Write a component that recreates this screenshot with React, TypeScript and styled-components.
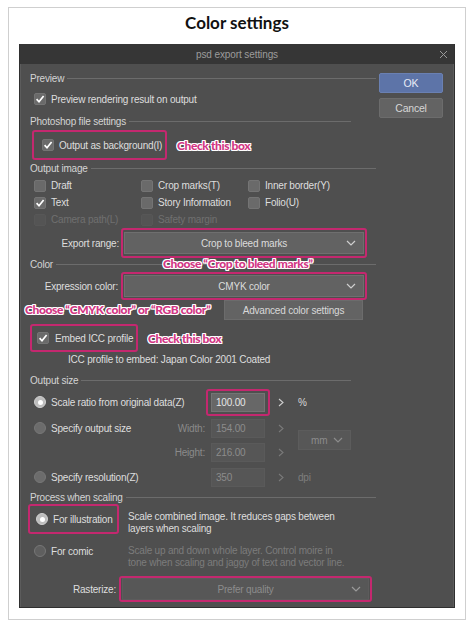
import styled, { createGlobalStyle } from 'styled-components';

const GlobalStyle = createGlobalStyle`
  html, body {
    margin: 0;
    padding: 0;
    background: #ffffff;
  }
  body {
    font-family: 'Liberation Sans', Arial, sans-serif;
  }
`;

const Page = styled.div`
  width: 474px;
  height: 627px;
  box-sizing: border-box;
  padding: 7px 8px;
`;

const Frame = styled.div`
  height: 613px;
  box-sizing: border-box;
  border: 1px solid #cfcfcf;
  display: flex;
  flex-direction: column;
`;

const Title = styled.h1`
  margin: 0;
  height: 36px;
  line-height: 30px;
  text-align: center;
  font-family: Lato, 'Noto Sans', sans-serif;
  font-weight: 700;
  font-size: 17px;
  color: #111;
`;

const Dialog = styled.div`
  margin: 0 10px;
  border: 1px solid #2f2f2f;
  border-top: none;
  display: flex;
  flex-direction: column;
`;

const TitleBar = styled.div`
  height: 20px;
  background: #363636;
  display: flex;
  align-items: center;
  justify-content: center;
  position: relative;
  color: #9c9c9c;
  font-size: 10px;
  letter-spacing: -0.1px;
`;

const CloseIcon = styled.svg`
  position: absolute;
  right: 6px;
  top: 6px;
`;

const Body = styled.div`
  display: grid;
  grid-template-columns: 359px 64px;
  padding: 6px 12px 8px 0;
  height: 543px;
  box-sizing: border-box;
  background: #4f4f4f;
  box-shadow: inset 1px 0 0 #5c5c5c, inset -1px 0 0 #5c5c5c;
  font-size: 10px;
  letter-spacing: -0.2px;
  color: #dedede;
`;

const Main = styled.div`
  display: flex;
  flex-direction: column;
  padding-left: 10px;
`;

const Side = styled.div`
  display: flex;
  flex-direction: column;
  gap: 5px;
  padding-top: 3px;
`;

const DialogButton = styled.div<{ $primary?: boolean }>`
  height: 20px;
  border-radius: 2px;
  display: flex;
  align-items: center;
  justify-content: center;
  font-size: 10.5px;
  color: ${({ $primary }) => ($primary ? '#e8ecf6' : '#d6d6d6')};
  background: ${({ $primary }) => ($primary ? '#5d74a8' : '#636363')};
  border: 1px solid ${({ $primary }) => ($primary ? '#6a80b2' : '#6c6c6c')};
  box-sizing: border-box;
`;

const SectionHeader = styled.div<{ $h: number; $w: number; $mt?: number }>`
  display: flex;
  align-items: center;
  gap: 3px;
  height: ${({ $h }) => $h}px;
  width: ${({ $w }) => $w}px;
  margin-top: ${({ $mt }) => $mt ?? 0}px;
  color: #d4d4d4;
  position: relative;
  &::after {
    content: '';
    flex: 1;
    height: 1px;
    background: #6c6c6c;
  }
`;

const Row = styled.div<{ $h: number; $pl?: number; $mt?: number }>`
  display: flex;
  align-items: center;
  height: ${({ $h }) => $h}px;
  padding-left: ${({ $pl }) => $pl ?? 0}px;
  margin-top: ${({ $mt }) => $mt ?? 0}px;
  position: relative;
`;

const Item = styled.div<{ $gap?: number; $tone?: 'on' | 'dim' | 'off' }>`
  display: flex;
  align-items: center;
  gap: ${({ $gap }) => $gap ?? 5}px;
  white-space: nowrap;
  color: ${({ $tone }) =>
    $tone === 'off' ? '#707070' : $tone === 'dim' ? '#8c8c8c' : '#dedede'};
`;

const Box = styled.span<{ $off?: boolean }>`
  width: 12px;
  height: 12px;
  box-sizing: border-box;
  border-radius: 2px;
  background: ${({ $off }) => ($off ? '#545454' : '#6a6a6a')};
  border: 1px solid ${({ $off }) => ($off ? '#575757' : '#747474')};
  display: inline-flex;
  align-items: center;
  justify-content: center;
  flex: none;
`;

const Radio = styled.span<{ $on?: boolean; $off?: boolean }>`
  width: 12px;
  height: 12px;
  box-sizing: border-box;
  border-radius: 50%;
  flex: none;
  background: ${({ $on, $off }) => ($on ? '#bdbdbd' : $off ? '#5f5f5f' : '#6c6c6c')};
  border: 1px solid ${({ $on }) => ($on ? '#d0d0d0' : '#777')};
  display: inline-flex;
  align-items: center;
  justify-content: center;
  &::after {
    content: '';
    display: ${({ $on }) => ($on ? 'block' : 'none')};
    width: 5px;
    height: 5px;
    border-radius: 50%;
    background: #ffffff;
  }
`;

const Highlight = styled.div<{ $w: number; $h: number; $pad?: string; $ml?: number }>`
  box-sizing: border-box;
  width: ${({ $w }) => $w}px;
  height: ${({ $h }) => $h}px;
  margin-left: ${({ $ml }) => $ml ?? 0}px;
  padding: ${({ $pad }) => $pad ?? '0'};
  border: 2px solid #c4286f;
  border-radius: 3px;
  display: flex;
  align-items: center;
  flex: none;
`;

const Note = styled.span`
  font-family: Lato, 'Noto Sans', sans-serif;
  font-weight: 900;
  font-size: 12px;
  letter-spacing: -0.4px;
  color: #d23684;
  white-space: nowrap;
  text-shadow:
    1px 0 0 #fff, -1px 0 0 #fff, 0 1px 0 #fff, 0 -1px 0 #fff,
    1px 1px 0 #fff, -1px -1px 0 #fff, 1px -1px 0 #fff, -1px 1px 0 #fff;
`;

const FloatingNote = styled(Note)<{ $left: number; $top: number }>`
  position: absolute;
  left: ${({ $left }) => $left}px;
  top: ${({ $top }) => $top}px;
  line-height: 14px;
`;

const OptionGrid = styled.div`
  display: grid;
  grid-template-columns: 107px 107px auto;
  grid-auto-rows: 17px;
  padding-left: 4px;
  align-items: center;
`;

const FieldLabel = styled.div<{ $w: number; $tone?: 'dim' }>`
  width: ${({ $w }) => $w}px;
  text-align: right;
  flex: none;
  white-space: nowrap;
  color: ${({ $tone }) => ($tone === 'dim' ? '#8a8a8a' : '#dedede')};
`;

const Select = styled.div<{ $w: number; $h: number; $off?: boolean }>`
  box-sizing: border-box;
  width: ${({ $w }) => $w}px;
  height: ${({ $h }) => $h}px;
  background: ${({ $off }) => ($off ? '#575757' : '#626262')};
  border: 1px solid ${({ $off }) => ($off ? '#5c5c5c' : '#6f6f6f')};
  display: flex;
  align-items: center;
  justify-content: center;
  position: relative;
  color: ${({ $off }) => ($off ? '#8c8c8c' : '#dcdcdc')};
  svg {
    position: absolute;
    right: 7px;
    top: 50%;
    margin-top: -3px;
  }
`;

const PlainButton = styled.div<{ $w: number; $ml: number }>`
  box-sizing: border-box;
  width: ${({ $w }) => $w}px;
  height: 20px;
  margin-left: ${({ $ml }) => $ml}px;
  background: #636363;
  border: 1px solid #6c6c6c;
  display: flex;
  align-items: center;
  justify-content: center;
  color: #d8d8d8;
`;

const SizeGrid = styled.div`
  display: grid;
  grid-template-columns: 176px 64px 28px auto;
  grid-template-rows: 28px 24px 24px 26px;
  align-items: center;
`;

const Input = styled.div<{ $active?: boolean }>`
  box-sizing: border-box;
  width: 54px;
  height: 19px;
  margin-left: ${({ $active }) => ($active ? 0 : 5)}px;
  padding-left: 4px;
  display: flex;
  align-items: center;
  background: ${({ $active }) => ($active ? '#676767' : '#565656')};
  border: 1px solid ${({ $active }) => ($active ? '#747474' : '#5a5a5a')};
  color: ${({ $active }) => ($active ? '#e6e6e6' : '#8c8c8c')};
`;

const Arrow = styled.div`
  padding-left: 8px;
  display: flex;
  align-items: center;
`;

const Unit = styled.div<{ $on?: boolean }>`
  color: ${({ $on }) => ($on ? '#d8d8d8' : '#7e7e7e')};
`;

const ScaleGrid = styled.div`
  display: grid;
  grid-template-columns: 98px auto;
  grid-template-rows: 30px 40px;
`;

const Desc = styled.div<{ $pt: number; $dim?: boolean }>`
  padding-top: ${({ $pt }) => $pt}px;
  line-height: 12px;
  color: ${({ $dim }) => ($dim ? '#7c7c7c' : '#dedede')};
`;

const Check = () => (
  <svg width="10" height="10" viewBox="0 0 10 10">
    <polyline points="1.6,5.2 4,7.8 8.6,2" fill="none" stroke="#ffffff" strokeWidth="1.7" />
  </svg>
);

const Chevron = ({ color = '#cfcfcf' }: { color?: string }) => (
  <svg width="10" height="6" viewBox="0 0 10 6">
    <polyline points="1,1 5,5 9,1" fill="none" stroke={color} strokeWidth="1.2" />
  </svg>
);

const RightArrow = ({ color }: { color: string }) => (
  <svg width="6" height="9" viewBox="0 0 6 9">
    <polyline points="1,1 5,4.5 1,8" fill="none" stroke={color} strokeWidth="1.1" />
  </svg>
);

const CheckItem = ({ label, checked, off }: { label: string; checked?: boolean; off?: boolean }) => (
  <Item $tone={off ? 'off' : 'on'}>
    <Box $off={off}>{checked && <Check />}</Box>
    {label}
  </Item>
);

export default function App() {
  return (
    <>
      <GlobalStyle />
      <Page>
        <Frame>
          <Title>Color settings</Title>
          <Dialog>
            <TitleBar>
              psd export settings
              <CloseIcon width="9" height="9" viewBox="0 0 9 9">
                <path d="M1 1 L8 8 M8 1 L1 8" stroke="#9a9a9a" strokeWidth="1" />
              </CloseIcon>
            </TitleBar>
            <Body>
              <Main>
                <SectionHeader $h={16} $w={346}>Preview</SectionHeader>
                <Row $h={26} $pl={4}>
                  <CheckItem label="Preview rendering result on output" checked />
                </Row>

                <SectionHeader $h={18} $w={321}>Photoshop file settings</SectionHeader>
                <Row $h={30} $pl={2}>
                  <Highlight $w={135} $h={30} $pad="0 0 0 8px">
                    <CheckItem label="Output as background(I)" checked />
                  </Highlight>
                  <Note style={{ marginLeft: 10 }}>Check this box</Note>
                </Row>

                <SectionHeader $h={17} $w={346}>Output image</SectionHeader>
                <OptionGrid>
                  <CheckItem label="Draft" />
                  <CheckItem label="Crop marks(T)" />
                  <CheckItem label="Inner border(Y)" />
                  <CheckItem label="Text" checked />
                  <CheckItem label="Story Information" />
                  <CheckItem label="Folio(U)" />
                  <CheckItem label="Camera path(L)" off />
                  <CheckItem label="Safety margin" off />
                </OptionGrid>
                <Row $h={30}>
                  <FieldLabel $w={89}>Export range:</FieldLabel>
                  <Highlight $w={246} $h={30} $ml={2} $pad="0 1px">
                    <Select $w={240} $h={22}>
                      Crop to bleed marks
                      <Chevron />
                    </Select>
                  </Highlight>
                </Row>

                <SectionHeader $h={12} $w={346}>
                  Color
                  <FloatingNote $left={133} $top={-1}>Choose “Crop to bleed marks”</FloatingNote>
                </SectionHeader>
                <Row $h={28} $mt={2}>
                  <FieldLabel $w={88}>Expression color:</FieldLabel>
                  <Highlight $w={246} $h={28} $ml={3} $pad="0 1px">
                    <Select $w={240} $h={22}>
                      CMYK color
                      <Chevron />
                    </Select>
                  </Highlight>
                </Row>
                <Row $h={20}>
                  <FloatingNote $left={-5} $top={3}>Choose “CMYK color” or “RGB color”</FloatingNote>
                  <PlainButton $w={139} $ml={194}>Advanced color settings</PlainButton>
                </Row>
                <Row $h={28} $mt={4}>
                  <Highlight $w={108} $h={28} $pad="0 0 0 5px">
                    <Item $gap={6}>
                      <Box><Check /></Box>
                      Embed ICC profile
                    </Item>
                  </Highlight>
                  <Note style={{ marginLeft: 10 }}>Check this box</Note>
                </Row>
                <Row $h={14} $pl={38}>ICC profile to embed: Japan Color 2001 Coated</Row>

                <SectionHeader $h={16} $w={321} $mt={6}>Output size</SectionHeader>
                <SizeGrid>
                  <Item style={{ paddingLeft: 4 }}>
                    <Radio $on />
                    Scale ratio from original data(Z)
                  </Item>
                  <Highlight $w={64} $h={27} $pad="0 0 0 3px">
                    <Input $active>100.00</Input>
                  </Highlight>
                  <Arrow><RightArrow color="#cfcfcf" /></Arrow>
                  <Unit $on>%</Unit>

                  <Item style={{ paddingLeft: 4 }}>
                    <Radio />
                    Specify output size
                    <FieldLabel $w={68} $tone="dim" style={{ marginLeft: 'auto', paddingRight: 1 }}>Width:</FieldLabel>
                  </Item>
                  <Input>154.00</Input>
                  <Arrow><RightArrow color="#7a7a7a" /></Arrow>
                  <Select $w={53} $h={20} $off style={{ gridRow: '2 / 4', gridColumn: 4, justifyContent: 'flex-start', paddingLeft: 12 }}>
                    mm
                    <Chevron color="#8c8c8c" />
                  </Select>

                  <FieldLabel $w={175} $tone="dim">Height:</FieldLabel>
                  <Input>216.00</Input>
                  <Arrow><RightArrow color="#7a7a7a" /></Arrow>

                  <Item style={{ paddingLeft: 4 }}>
                    <Radio />
                    Specify resolution(Z)
                  </Item>
                  <Input>350</Input>
                  <Arrow><RightArrow color="#7a7a7a" /></Arrow>
                  <Unit>dpi</Unit>
                </SizeGrid>

                <SectionHeader $h={14} $w={346}>Process when scaling</SectionHeader>
                <ScaleGrid>
                  <Highlight $w={91} $h={30} $ml={-2} $pad="0 0 0 6px">
                    <Item>
                      <Radio $on />
                      For illustration
                    </Item>
                  </Highlight>
                  <Desc $pt={7}>
                    Scale combined image. It reduces gaps between
                    <br />
                    layers when scaling
                  </Desc>
                  <Item style={{ paddingLeft: 4, alignSelf: 'start', paddingTop: 10, height: 14 }}>
                    <Radio $off />
                    For comic
                  </Item>
                  <Desc $pt={11} $dim>
                    Scale up and down whole layer. Control moire in
                    <br />
                    tone when scaling and jaggy of text and vector line.
                  </Desc>
                </ScaleGrid>
                <Row $h={26} $mt={2}>
                  <FieldLabel $w={86}>Rasterize:</FieldLabel>
                  <Highlight $w={253} $h={26} $ml={3} $pad="0 1px">
                    <Select $w={247} $h={22} $off>
                      Prefer quality
                      <Chevron color="#9a9a9a" />
                    </Select>
                  </Highlight>
                </Row>
              </Main>
              <Side>
                <DialogButton $primary>OK</DialogButton>
                <DialogButton>Cancel</DialogButton>
              </Side>
            </Body>
          </Dialog>
        </Frame>
      </Page>
    </>
  );
}
